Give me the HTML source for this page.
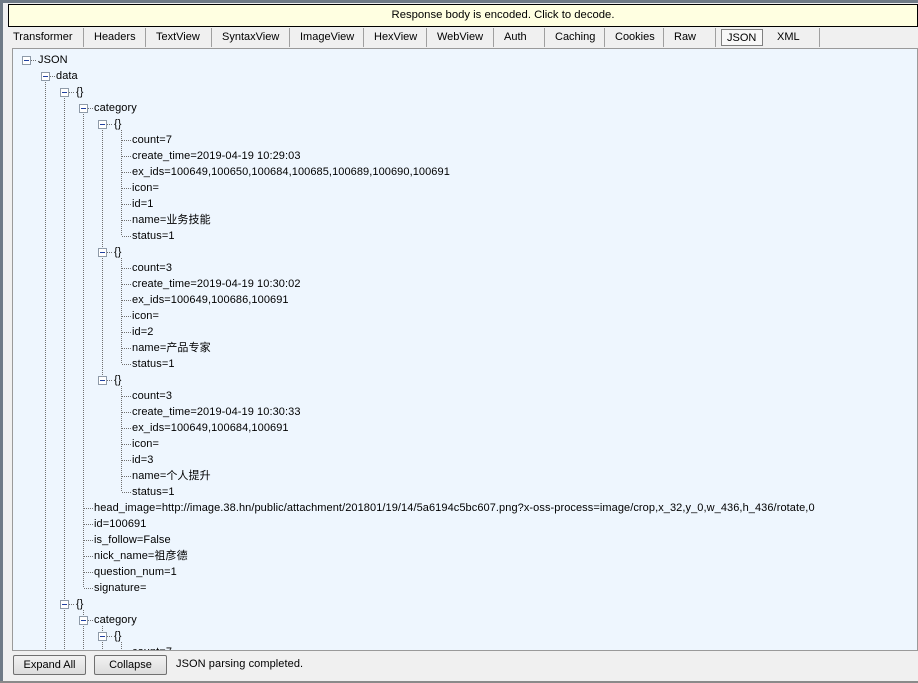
<!DOCTYPE html>
<html><head><meta charset="utf-8"><style>
*{margin:0;padding:0;box-sizing:border-box}
body{width:918px;height:683px;overflow:hidden;background:#f0f0f0;font-family:"Liberation Sans","Noto Sans CJK SC",sans-serif;font-size:11px;color:#000;position:relative}
.a{position:absolute}
#top{left:0;top:0;width:918px;height:3px;background:#6f7a86}
#left{left:0;top:0;width:3px;height:683px;background:#6f7a86}
#bar{left:8px;top:4px;width:910px;height:23px;background:#ffffe1;border:1px solid #000;text-align:center;line-height:21px;font-size:11.3px;padding-left:80px}
.tab{position:absolute;top:28px;height:19px;line-height:18px;padding-left:5px;border-right:1px solid #a0a0a0;font-size:11px}
#panel{left:12px;top:48px;width:906px;height:603px;background:#eef6fe;border:1px solid #9a9a9a;overflow:hidden}
.t{position:absolute;white-space:nowrap;line-height:14px;font-size:11px;letter-spacing:0.08px}
.b{position:absolute;width:9px;height:9px;border:1px solid #8e9aa8;background:#fff}
.b:after{content:"";position:absolute;left:1px;top:3px;width:5px;height:1px;background:#2040a0}
.v{position:absolute;width:1px;background:repeating-linear-gradient(#707070 0 1px,transparent 1px 2px)}
.h{position:absolute;height:1px;background:repeating-linear-gradient(90deg,#707070 0 1px,transparent 1px 2px)}
.btn{position:absolute;top:655px;height:20px;border:1px solid #707070;border-radius:2px;background:linear-gradient(#f2f2f2,#dcdcdc);text-align:center;line-height:18px;font-size:11px}
</style></head><body>
<div class="a" id="top"></div><div class="a" id="left"></div>
<div class="a" id="bar">Response body is encoded. Click to decode.</div>
<div class="tab" style="left:8px;width:76px">Transformer</div>
<div class="tab" style="left:84px;width:62px;padding-left:10px">Headers</div>
<div class="tab" style="left:146px;width:66px;padding-left:10px">TextView</div>
<div class="tab" style="left:212px;width:78px;padding-left:10px">SyntaxView</div>
<div class="tab" style="left:290px;width:74px;padding-left:10px">ImageView</div>
<div class="tab" style="left:364px;width:63px;padding-left:10px">HexView</div>
<div class="tab" style="left:427px;width:67px;padding-left:10px">WebView</div>
<div class="tab" style="left:494px;width:51px;padding-left:10px">Auth</div>
<div class="tab" style="left:545px;width:60px;padding-left:10px">Caching</div>
<div class="tab" style="left:605px;width:59px;padding-left:10px">Cookies</div>
<div class="tab" style="left:664px;width:52px;padding-left:10px">Raw</div>
<div class="tab" style="left:721px;top:29px;height:17px;width:42px;background:#f8f8f8;border:1px solid #808080;line-height:16px">JSON</div>
<div class="tab" style="left:767px;width:53px;padding-left:10px">XML</div>
<div class="a" id="panel"></div>

<div class="v" style="left:45px;top:82px;height:568px"></div>
<div class="v" style="left:64px;top:98px;height:552px"></div>
<div class="v" style="left:83px;top:114px;height:474px"></div>
<div class="v" style="left:83px;top:610px;height:40px"></div>
<div class="v" style="left:102px;top:130px;height:250px"></div>
<div class="v" style="left:102px;top:626px;height:24px"></div>
<div class="v" style="left:121px;top:130px;height:106px"></div>
<div class="v" style="left:121px;top:258px;height:106px"></div>
<div class="v" style="left:121px;top:386px;height:106px"></div>
<div class="v" style="left:121px;top:642px;height:8px"></div>

<div class="b" style="left:22px;top:56px"></div><div class="h" style="left:31px;top:60px;width:5px"></div><div class="t" style="left:38px;top:53px">JSON</div>
<div class="b" style="left:41px;top:72px"></div><div class="h" style="left:50px;top:76px;width:5px"></div><div class="t" style="left:56px;top:69px">data</div>
<div class="b" style="left:60px;top:88px"></div><div class="h" style="left:69px;top:92px;width:5px"></div><div class="t" style="left:76px;top:85px">{}</div>
<div class="b" style="left:79px;top:104px"></div><div class="h" style="left:88px;top:108px;width:5px"></div><div class="t" style="left:94px;top:101px">category</div>
<div class="b" style="left:98px;top:120px"></div><div class="h" style="left:107px;top:124px;width:5px"></div><div class="t" style="left:114px;top:117px">{}</div>
<div class="b" style="left:98px;top:248px"></div><div class="h" style="left:107px;top:252px;width:5px"></div><div class="t" style="left:114px;top:245px">{}</div>
<div class="b" style="left:98px;top:376px"></div><div class="h" style="left:107px;top:380px;width:5px"></div><div class="t" style="left:114px;top:373px">{}</div>
<div class="b" style="left:60px;top:600px"></div><div class="h" style="left:69px;top:604px;width:5px"></div><div class="t" style="left:76px;top:597px">{}</div>
<div class="b" style="left:79px;top:616px"></div><div class="h" style="left:88px;top:620px;width:5px"></div><div class="t" style="left:94px;top:613px">category</div>
<div class="b" style="left:98px;top:632px"></div><div class="h" style="left:107px;top:636px;width:5px"></div><div class="t" style="left:114px;top:629px">{}</div>

<div class="h" style="left:122px;top:140px;width:9px"></div><div class="t" style="left:132px;top:133px">count=7</div>
<div class="h" style="left:122px;top:156px;width:9px"></div><div class="t" style="left:132px;top:149px">create_time=2019-04-19 10:29:03</div>
<div class="h" style="left:122px;top:172px;width:9px"></div><div class="t" style="left:132px;top:165px">ex_ids=100649,100650,100684,100685,100689,100690,100691</div>
<div class="h" style="left:122px;top:188px;width:9px"></div><div class="t" style="left:132px;top:181px">icon=</div>
<div class="h" style="left:122px;top:204px;width:9px"></div><div class="t" style="left:132px;top:197px">id=1</div>
<div class="h" style="left:122px;top:220px;width:9px"></div><div class="t" style="left:132px;top:213px">name=业务技能</div>
<div class="h" style="left:122px;top:236px;width:9px"></div><div class="t" style="left:132px;top:229px">status=1</div>

<div class="h" style="left:122px;top:268px;width:9px"></div><div class="t" style="left:132px;top:261px">count=3</div>
<div class="h" style="left:122px;top:284px;width:9px"></div><div class="t" style="left:132px;top:277px">create_time=2019-04-19 10:30:02</div>
<div class="h" style="left:122px;top:300px;width:9px"></div><div class="t" style="left:132px;top:293px">ex_ids=100649,100686,100691</div>
<div class="h" style="left:122px;top:316px;width:9px"></div><div class="t" style="left:132px;top:309px">icon=</div>
<div class="h" style="left:122px;top:332px;width:9px"></div><div class="t" style="left:132px;top:325px">id=2</div>
<div class="h" style="left:122px;top:348px;width:9px"></div><div class="t" style="left:132px;top:341px">name=产品专家</div>
<div class="h" style="left:122px;top:364px;width:9px"></div><div class="t" style="left:132px;top:357px">status=1</div>

<div class="h" style="left:122px;top:396px;width:9px"></div><div class="t" style="left:132px;top:389px">count=3</div>
<div class="h" style="left:122px;top:412px;width:9px"></div><div class="t" style="left:132px;top:405px">create_time=2019-04-19 10:30:33</div>
<div class="h" style="left:122px;top:428px;width:9px"></div><div class="t" style="left:132px;top:421px">ex_ids=100649,100684,100691</div>
<div class="h" style="left:122px;top:444px;width:9px"></div><div class="t" style="left:132px;top:437px">icon=</div>
<div class="h" style="left:122px;top:460px;width:9px"></div><div class="t" style="left:132px;top:453px">id=3</div>
<div class="h" style="left:122px;top:476px;width:9px"></div><div class="t" style="left:132px;top:469px">name=个人提升</div>
<div class="h" style="left:122px;top:492px;width:9px"></div><div class="t" style="left:132px;top:485px">status=1</div>

<div class="h" style="left:84px;top:508px;width:9px"></div><div class="t" style="left:94px;top:501px">head_image=http://image.38.hn/public/attachment/201801/19/14/5a6194c5bc607.png?x-oss-process=image/crop,x_32,y_0,w_436,h_436/rotate,0</div>
<div class="h" style="left:84px;top:524px;width:9px"></div><div class="t" style="left:94px;top:517px">id=100691</div>
<div class="h" style="left:84px;top:540px;width:9px"></div><div class="t" style="left:94px;top:533px">is_follow=False</div>
<div class="h" style="left:84px;top:556px;width:9px"></div><div class="t" style="left:94px;top:549px">nick_name=祖彦德</div>
<div class="h" style="left:84px;top:572px;width:9px"></div><div class="t" style="left:94px;top:565px">question_num=1</div>
<div class="h" style="left:84px;top:588px;width:9px"></div><div class="t" style="left:94px;top:581px">signature=</div>
<div class="t" style="left:132px;top:645px;height:5px;overflow:hidden">count=7</div>
<div class="a" style="left:12px;top:650px;width:906px;height:1px;background:#9a9a9a"></div>
<div class="a" style="left:12px;top:651px;width:906px;height:30px;background:#f0f0f0"></div>

<div class="btn" style="left:13px;width:73px">Expand All</div>
<div class="btn" style="left:94px;width:73px">Collapse</div>
<div class="t" style="left:176px;top:657px">JSON parsing completed.</div>
<div class="a" style="left:0;top:681px;width:918px;height:2px;background:#8a8a8a"></div>
</body></html>
